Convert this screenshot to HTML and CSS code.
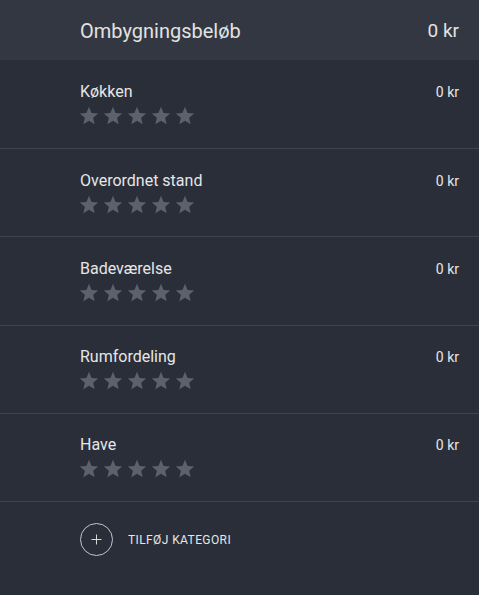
FILE: index.html
```html
<!DOCTYPE html>
<html lang="da">
<head>
<meta charset="utf-8">
<title>Ombygningsbeløb</title>
<link rel="stylesheet" href="styles.css">
</head>
<body>
<div class="panel">
  <div class="header">
    <span class="header-title">Ombygningsbeløb</span>
    <span class="header-amount">0 kr</span>
  </div>

  <div class="rows">
  <div class="row">
    <div class="row-main">
      <div class="row-title">Køkken</div>
      <div class="stars">
        <svg class="star" viewBox="0 0 24 24"><path d="M12 17.27L18.18 21l-1.64-7.03L22 9.24l-7.19-.61L12 2 9.19 8.63 2 9.24l5.46 4.73L5.82 21z"/></svg>
        <svg class="star" viewBox="0 0 24 24"><path d="M12 17.27L18.18 21l-1.64-7.03L22 9.24l-7.19-.61L12 2 9.19 8.63 2 9.24l5.46 4.73L5.82 21z"/></svg>
        <svg class="star" viewBox="0 0 24 24"><path d="M12 17.27L18.18 21l-1.64-7.03L22 9.24l-7.19-.61L12 2 9.19 8.63 2 9.24l5.46 4.73L5.82 21z"/></svg>
        <svg class="star" viewBox="0 0 24 24"><path d="M12 17.27L18.18 21l-1.64-7.03L22 9.24l-7.19-.61L12 2 9.19 8.63 2 9.24l5.46 4.73L5.82 21z"/></svg>
        <svg class="star" viewBox="0 0 24 24"><path d="M12 17.27L18.18 21l-1.64-7.03L22 9.24l-7.19-.61L12 2 9.19 8.63 2 9.24l5.46 4.73L5.82 21z"/></svg>
      </div>
    </div>
    <div class="row-amount">0 kr</div>
  </div>

  <div class="row">
    <div class="row-main">
      <div class="row-title">Overordnet stand</div>
      <div class="stars">
        <svg class="star" viewBox="0 0 24 24"><path d="M12 17.27L18.18 21l-1.64-7.03L22 9.24l-7.19-.61L12 2 9.19 8.63 2 9.24l5.46 4.73L5.82 21z"/></svg>
        <svg class="star" viewBox="0 0 24 24"><path d="M12 17.27L18.18 21l-1.64-7.03L22 9.24l-7.19-.61L12 2 9.19 8.63 2 9.24l5.46 4.73L5.82 21z"/></svg>
        <svg class="star" viewBox="0 0 24 24"><path d="M12 17.27L18.18 21l-1.64-7.03L22 9.24l-7.19-.61L12 2 9.19 8.63 2 9.24l5.46 4.73L5.82 21z"/></svg>
        <svg class="star" viewBox="0 0 24 24"><path d="M12 17.27L18.18 21l-1.64-7.03L22 9.24l-7.19-.61L12 2 9.19 8.63 2 9.24l5.46 4.73L5.82 21z"/></svg>
        <svg class="star" viewBox="0 0 24 24"><path d="M12 17.27L18.18 21l-1.64-7.03L22 9.24l-7.19-.61L12 2 9.19 8.63 2 9.24l5.46 4.73L5.82 21z"/></svg>
      </div>
    </div>
    <div class="row-amount">0 kr</div>
  </div>

  <div class="row">
    <div class="row-main">
      <div class="row-title">Badeværelse</div>
      <div class="stars">
        <svg class="star" viewBox="0 0 24 24"><path d="M12 17.27L18.18 21l-1.64-7.03L22 9.24l-7.19-.61L12 2 9.19 8.63 2 9.24l5.46 4.73L5.82 21z"/></svg>
        <svg class="star" viewBox="0 0 24 24"><path d="M12 17.27L18.18 21l-1.64-7.03L22 9.24l-7.19-.61L12 2 9.19 8.63 2 9.24l5.46 4.73L5.82 21z"/></svg>
        <svg class="star" viewBox="0 0 24 24"><path d="M12 17.27L18.18 21l-1.64-7.03L22 9.24l-7.19-.61L12 2 9.19 8.63 2 9.24l5.46 4.73L5.82 21z"/></svg>
        <svg class="star" viewBox="0 0 24 24"><path d="M12 17.27L18.18 21l-1.64-7.03L22 9.24l-7.19-.61L12 2 9.19 8.63 2 9.24l5.46 4.73L5.82 21z"/></svg>
        <svg class="star" viewBox="0 0 24 24"><path d="M12 17.27L18.18 21l-1.64-7.03L22 9.24l-7.19-.61L12 2 9.19 8.63 2 9.24l5.46 4.73L5.82 21z"/></svg>
      </div>
    </div>
    <div class="row-amount">0 kr</div>
  </div>

  <div class="row">
    <div class="row-main">
      <div class="row-title">Rumfordeling</div>
      <div class="stars">
        <svg class="star" viewBox="0 0 24 24"><path d="M12 17.27L18.18 21l-1.64-7.03L22 9.24l-7.19-.61L12 2 9.19 8.63 2 9.24l5.46 4.73L5.82 21z"/></svg>
        <svg class="star" viewBox="0 0 24 24"><path d="M12 17.27L18.18 21l-1.64-7.03L22 9.24l-7.19-.61L12 2 9.19 8.63 2 9.24l5.46 4.73L5.82 21z"/></svg>
        <svg class="star" viewBox="0 0 24 24"><path d="M12 17.27L18.18 21l-1.64-7.03L22 9.24l-7.19-.61L12 2 9.19 8.63 2 9.24l5.46 4.73L5.82 21z"/></svg>
        <svg class="star" viewBox="0 0 24 24"><path d="M12 17.27L18.18 21l-1.64-7.03L22 9.24l-7.19-.61L12 2 9.19 8.63 2 9.24l5.46 4.73L5.82 21z"/></svg>
        <svg class="star" viewBox="0 0 24 24"><path d="M12 17.27L18.18 21l-1.64-7.03L22 9.24l-7.19-.61L12 2 9.19 8.63 2 9.24l5.46 4.73L5.82 21z"/></svg>
      </div>
    </div>
    <div class="row-amount">0 kr</div>
  </div>

  <div class="row">
    <div class="row-main">
      <div class="row-title">Have</div>
      <div class="stars">
        <svg class="star" viewBox="0 0 24 24"><path d="M12 17.27L18.18 21l-1.64-7.03L22 9.24l-7.19-.61L12 2 9.19 8.63 2 9.24l5.46 4.73L5.82 21z"/></svg>
        <svg class="star" viewBox="0 0 24 24"><path d="M12 17.27L18.18 21l-1.64-7.03L22 9.24l-7.19-.61L12 2 9.19 8.63 2 9.24l5.46 4.73L5.82 21z"/></svg>
        <svg class="star" viewBox="0 0 24 24"><path d="M12 17.27L18.18 21l-1.64-7.03L22 9.24l-7.19-.61L12 2 9.19 8.63 2 9.24l5.46 4.73L5.82 21z"/></svg>
        <svg class="star" viewBox="0 0 24 24"><path d="M12 17.27L18.18 21l-1.64-7.03L22 9.24l-7.19-.61L12 2 9.19 8.63 2 9.24l5.46 4.73L5.82 21z"/></svg>
        <svg class="star" viewBox="0 0 24 24"><path d="M12 17.27L18.18 21l-1.64-7.03L22 9.24l-7.19-.61L12 2 9.19 8.63 2 9.24l5.46 4.73L5.82 21z"/></svg>
      </div>
    </div>
    <div class="row-amount">0 kr</div>
  </div>
  </div>

  <div class="add">
    <span class="add-circle">
      <svg class="add-plus" viewBox="0 0 12 12"><path d="M6 0.5V11.5M0.5 6H11.5"/></svg>
    </span>
    <span class="add-label">Tilføj kategori</span>
  </div>
</div>
</body>
</html>
```

FILE: styles.css
```css
* { box-sizing: border-box; }

html, body {
  margin: 0;
  padding: 0;
  background: #2a2e39;
}

body {
  font-family: Roboto, "Noto Sans", sans-serif;
  color: #e4e4e4;
}

.panel {
  width: 479px;
  min-height: 595px;
  background: #2a2e39;
}

.header {
  height: 60px;
  background: #333741;
  display: flex;
  justify-content: space-between;
  align-items: flex-start;
  padding: 19px 20px 0 80px;
  font-size: 20px;
  line-height: 24px;
  color: #e2e2e2;
}

.header-amount {
  font-size: 19px;
}

.rows {
  padding-top: 0.75px;
}

.row {
  height: 88.25px;
  border-bottom: 1px solid #3f434d;
  display: flex;
  justify-content: space-between;
  align-items: flex-start;
  padding: 21.5px 20px 0 80px;
}

.row-main {
  display: flex;
  flex-direction: column;
}

.row-title {
  font-size: 16px;
  line-height: 20px;
  color: #e6e6e6;
}

.row-amount {
  font-size: 14px;
  line-height: 20px;
  font-weight: 400;
  color: #e6e6e6;
}

.stars {
  display: flex;
  gap: 2px;
  margin-top: 3px;
  margin-left: -2px;
}

.star {
  width: 22px;
  height: 22px;
  fill: #5d616d;
  display: block;
}

.add {
  display: flex;
  align-items: center;
  gap: 15px;
  padding: 21px 20px 0 80px;
}

.add-circle {
  width: 33px;
  height: 33px;
  border: 1px solid #c4c5c8;
  border-radius: 50%;
  display: flex;
  align-items: center;
  justify-content: center;
}

.add-plus {
  width: 11px;
  height: 11px;
  stroke: #d8d8d8;
  stroke-width: 1.1;
  fill: none;
  display: block;
}

.add-label {
  font-size: 12px;
  font-weight: 400;
  text-transform: uppercase;
  color: #e6e6e6;
  letter-spacing: 0.4px;
}
```
